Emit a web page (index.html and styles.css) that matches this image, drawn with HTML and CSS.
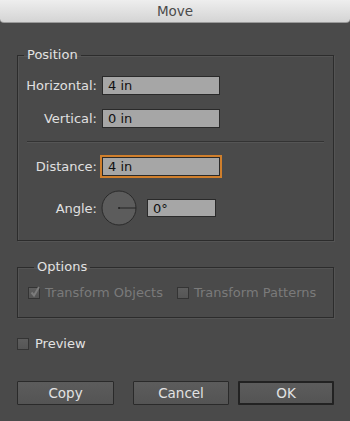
FILE: index.html
```html
<!DOCTYPE html>
<html lang="en">
<head>
    <meta charset="UTF-8">
    <meta name="viewport" content="width=device-width, initial-scale=1.0">
    <title>Move</title>
    <link rel="stylesheet" href="styles.css">
</head>
<body>
    <div class="titlebar">Move</div>

    <div class="dialog">
        <fieldset class="group position">
            <legend>Position</legend>
            <div class="row first">
                <span class="label">Horizontal:</span>
                <div class="field">4 in</div>
            </div>
            <div class="row">
                <span class="label">Vertical:</span>
                <div class="field">0 in</div>
            </div>
            <div class="separator"></div>
            <div class="row">
                <span class="label">Distance:</span>
                <div class="field focused">4 in</div>
            </div>
            <div class="row angle-row">
                <span class="label">Angle:</span>
                <svg class="dial" width="36" height="36" viewBox="0 0 36 36">
                    <circle cx="18" cy="18" r="17" fill="#5c5c5c" stroke="#2a2a2a" stroke-width="1"/>
                    <line x1="18" y1="18" x2="35" y2="18" stroke="#222" stroke-width="1"/>
                    <circle cx="18" cy="18" r="1" fill="#222"/>
                </svg>
                <div class="field small">0°</div>
            </div>
        </fieldset>

        <fieldset class="group options">
            <legend>Options</legend>
            <div class="check-row">
                <span class="check disabled">
                    <span class="box checked">
                        <svg width="12" height="12" viewBox="0 0 12 12"><path d="M2.5 6.5 L5 9.5 L10 1" fill="none" stroke="#7c7c7c" stroke-width="2"/></svg>
                    </span>
                    Transform Objects
                </span>
                <span class="check disabled">
                    <span class="box"></span>
                    Transform Patterns
                </span>
            </div>
        </fieldset>

        <span class="check preview">
            <span class="box"></span>
            Preview
        </span>

        <div class="buttons">
            <button class="btn copy">Copy</button>
            <button class="btn cancel">Cancel</button>
            <button class="btn default">OK</button>
        </div>
    </div>
</body>
</html>
```

FILE: styles.css
```css
* {
    box-sizing: border-box;
}
body {
    margin: 0;
    background: #4a4a4a;
    font-family: "DejaVu Sans", "Liberation Sans", sans-serif;
    font-size: 13px;
    color: #dedede;
}
.titlebar {
    height: 23px;
    line-height: 23px;
    text-align: center;
    font-size: 13.5px;
    color: #4b4b4b;
    background: linear-gradient(#eeeeee, #d4d4d4);
    border-bottom: 1px solid #9a9a9a;
    border-radius: 0 0 4px 4px;
}
.dialog {
    padding: 25px 16px 0 17px;
}
.group {
    margin: 0;
    padding: 0;
    border: 1px solid #2c2c2c;
    box-shadow: inset 1px 1px 0 #545454, 1px 1px 0 #545454;
    min-width: 0;
}
.group legend {
    margin-left: 6px;
    padding: 0 3px;
    line-height: 14px;
    font-size: 13px;
    color: #e2e2e2;
}
.position {
    padding-bottom: 14px;
}
.row {
    display: flex;
    align-items: center;
    margin-top: 14px;
}
.row .label {
    width: 79px;
    margin-right: 5px;
    text-align: right;
    white-space: nowrap;
    color: #e0e0e0;
}
.field {
    width: 118px;
    height: 19px;
    line-height: 17px;
    padding-left: 5px;
    background: #a6a6a6;
    border: 1px solid #2a2a2a;
    color: #111;
    font-size: 13px;
}
.field.focused {
    outline: 2px solid #d07f2c;
    outline-offset: 0;
}
.field.small {
    width: 69px;
    height: 18px;
    margin-left: 10px;
}
.separator {
    margin: 13px 9px 0 9px;
    height: 2px;
    border-top: 1px solid #333333;
    border-bottom: 1px solid #555555;
}
.angle-row {
    margin-top: 14px;
}
.dial {
    display: block;
    margin-left: -1px;
}
.options {
    margin-top: 19px;
    padding: 12px 0 17px 10px;
}
.check-row {
    display: flex;
    gap: 14px;
}
.check {
    display: inline-flex;
    align-items: center;
    gap: 5px;
    line-height: 14px;
    font-size: 13px;
}
.check.disabled {
    color: #7a7a7a;
}
.box {
    display: inline-block;
    flex-shrink: 0;
    width: 12px;
    height: 12px;
    background: linear-gradient(#5e5e5e, #555555);
    border: 1px solid #343434;
    position: relative;
}
.box svg {
    position: absolute;
    left: 0;
    top: -2px;
}
.preview {
    margin-top: 19px;
    gap: 6px;
    color: #e2e2e2;
}
.buttons {
    display: flex;
    margin-top: 28px;
}
.btn {
    flex-shrink: 0;
    width: 96px;
    height: 24px;
    padding: 0;
    font-family: inherit;
    font-size: 13.5px;
    color: #e2e2e2;
    background: linear-gradient(#5c5c5c, #545454);
    border: 1px solid #2a2a2a;
    border-radius: 1px;
}
.btn.copy {
    width: 97px;
}
.btn.cancel {
    margin-left: 19px;
}
.btn.default {
    margin-left: 9px;
    border: 2px solid #222222;
}
```
